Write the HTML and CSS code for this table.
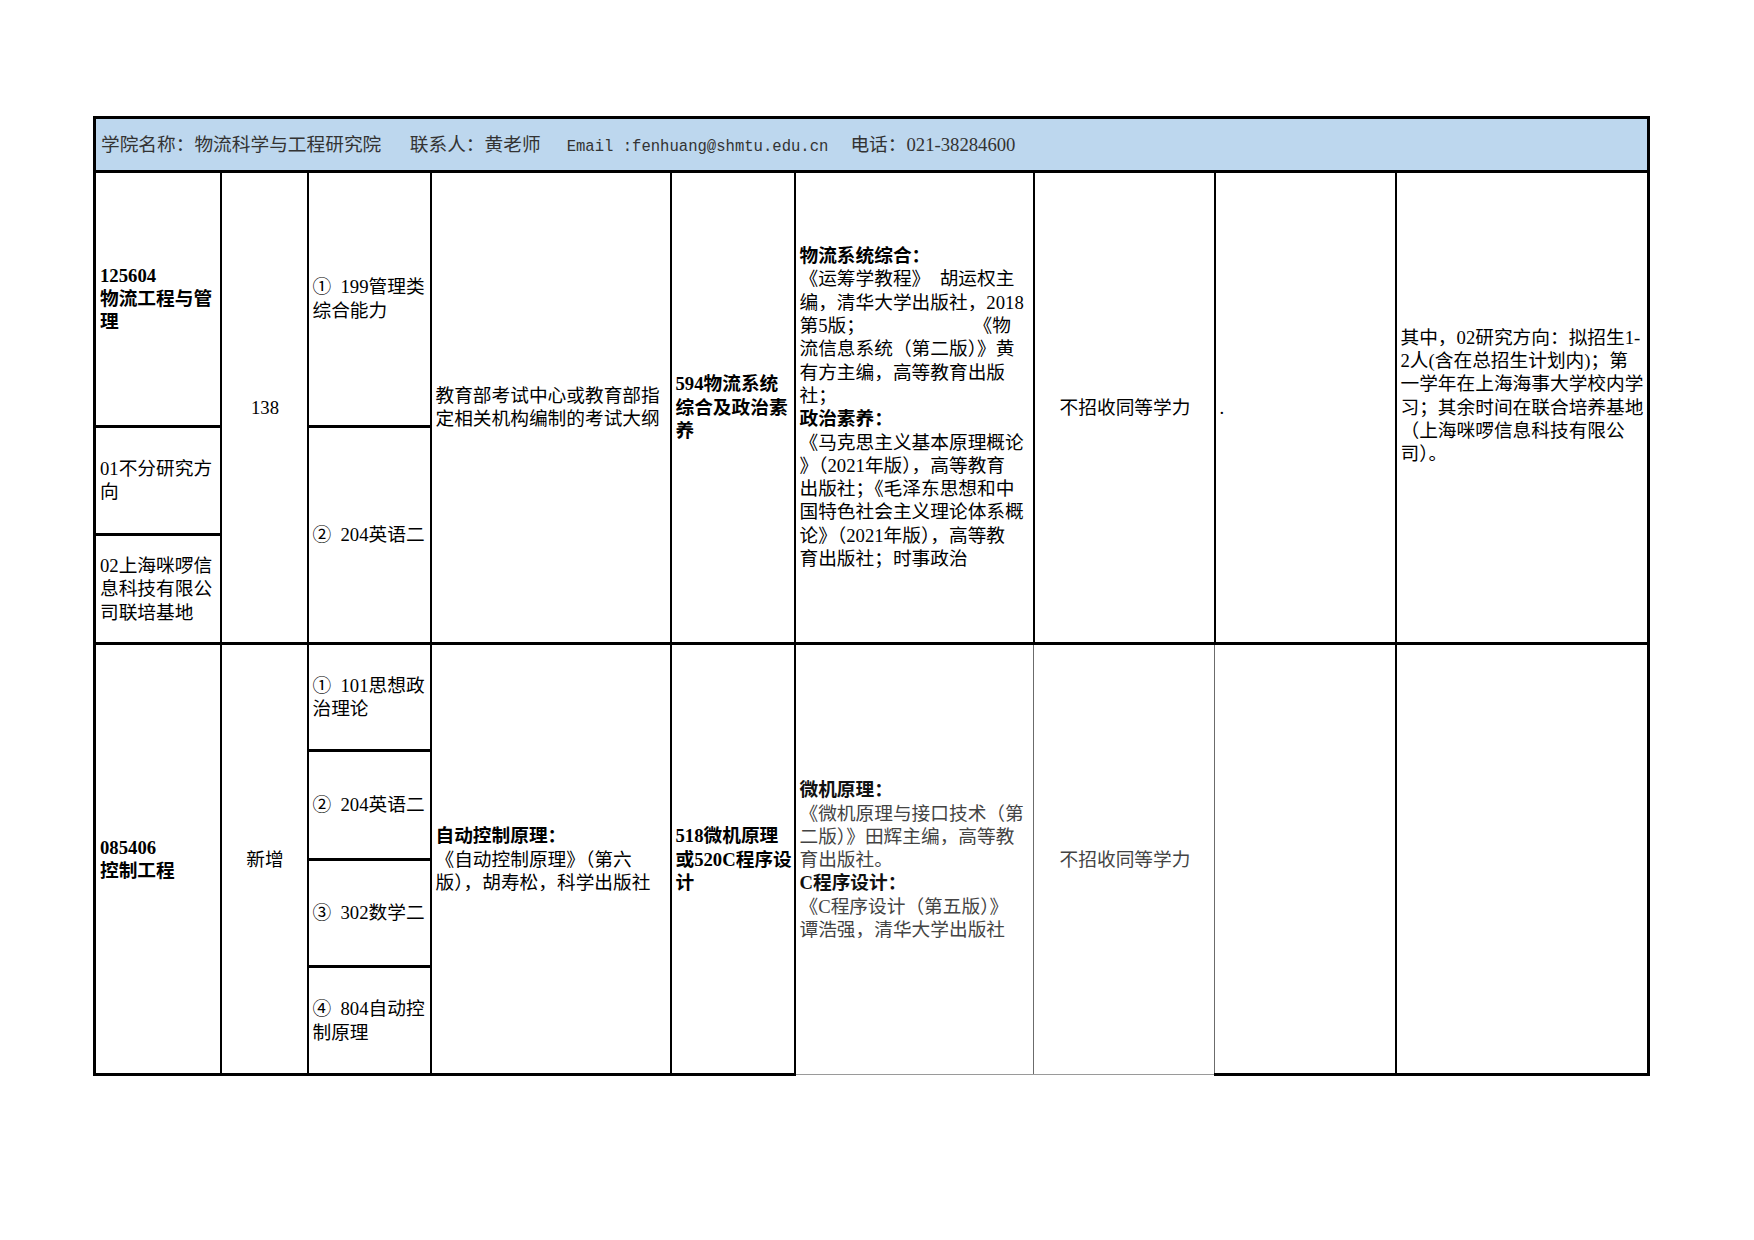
FILE: index.html
```html
<!DOCTYPE html>
<html lang="zh-CN">
<head>
<meta charset="utf-8">
<title>物流科学与工程研究院 招生目录</title>
<link rel="stylesheet" href="styles.css">
</head>
<body>
<table class="sheet">
  <colgroup>
    <col class="w1"><col class="w2"><col class="w3"><col class="w4"><col class="w5"><col class="w6"><col class="w7"><col class="w8"><col class="w9">
  </colgroup>
  <tr class="h-head">
    <td colspan="9" class="head"><span>学院名称：物流科学与工程研究院</span><span class="sep1">联系人：黄老师</span><span class="sep2 mono">Email :fenhuang@shmtu.edu.cn</span><span class="sep3">电话：021-38284600</span></td>
  </tr>
  <tr class="h-1a">
    <td class="first strong">125604<br>物流工程与管<br>理</td>
    <td rowspan="3" class="center">138</td>
    <td>①&ensp;199管理类<br>综合能力</td>
    <td rowspan="3">教育部考试中心或教育部指<br>定相关机构编制的考试大纲</td>
    <td rowspan="3" class="strong">594物流系统<br>综合及政治素<br>养</td>
    <td rowspan="3"><strong>物流系统综合：</strong><br>《运筹学教程》&ensp;胡运权主<br>编，清华大学出版社，2018<br>第5版；<span class="gap">《物</span><br>流信息系统（第二版）》黄<br>有方主编，高等教育出版<br>社；<br><strong>政治素养：</strong><br>《马克思主义基本原理概论<br>》（2021年版），高等教育<br>出版社；《毛泽东思想和中<br>国特色社会主义理论体系概<br>论》（2021年版），高等教<br>育出版社；时事政治</td>
    <td rowspan="3" class="center">不招收同等学力</td>
    <td rowspan="3">.</td>
    <td rowspan="3" class="last lift">其中，02研究方向：拟招生1-<br>2人(含在总招生计划内)；第<br>一学年在上海海事大学校内学<br>习；其余时间在联合培养基地<br>（上海咪啰信息科技有限公<br>司）。</td>
  </tr>
  <tr class="h-1b">
    <td class="first">01不分研究方<br>向</td>
    <td rowspan="2">②&ensp;204英语二</td>
  </tr>
  <tr class="h-1c">
    <td class="first">02上海咪啰信<br>息科技有限公<br>司联培基地</td>
  </tr>
  <tr class="h-2a group">
    <td rowspan="4" class="first bottom strong">085406<br>控制工程</td>
    <td rowspan="4" class="bottom center">新增</td>
    <td>①&ensp;101思想政<br>治理论</td>
    <td rowspan="4" class="bottom"><strong>自动控制原理：</strong><br>《自动控制原理》（第六<br>版），胡寿松，科学出版社</td>
    <td rowspan="4" class="bottom strong">518微机原理<br>或520C程序设<br>计</td>
    <td rowspan="4" class="muted soft-r soft-b"><strong>微机原理：</strong><br>《微机原理与接口技术（第<br>二版）》田辉主编，高等教<br>育出版社。<br><strong>C程序设计：</strong><br>《C程序设计（第五版）》<br>谭浩强，清华大学出版社</td>
    <td rowspan="4" class="muted center soft-l soft-r soft-b">不招收同等学力</td>
    <td rowspan="4" class="bottom soft-l"></td>
    <td rowspan="4" class="last bottom"></td>
  </tr>
  <tr class="h-2b">
    <td>②&ensp;204英语二</td>
  </tr>
  <tr class="h-2c">
    <td>③&ensp;302数学二</td>
  </tr>
  <tr class="h-2d">
    <td class="bottom">④&ensp;804自动控<br>制原理</td>
  </tr>
</table>
</body>
</html>
```

FILE: styles.css
```css
html, body {
  margin: 0;
  padding: 0;
  background: #ffffff;
}

body {
  font-family: "Liberation Serif", "Noto Sans CJK SC", serif;
  font-size: 18.7px;
  line-height: 23.3px;
  color: #000000;
}

.sheet {
  border-collapse: collapse;
  table-layout: fixed;
  width: 1554px;
  margin: 116px 0 0 93px;
}

.w1 { width: 126px; }
.w2 { width: 87px; }
.w3 { width: 123px; }
.w4 { width: 240px; }
.w5 { width: 124px; }
.w6 { width: 239px; }
.w7 { width: 181px; }
.w8 { width: 181px; }
.w9 { width: 253px; }

.sheet td {
  border: 2px solid #000000;
  border-top-width: 3px;
  border-bottom-width: 3px;
  padding: 0 2px 0 4px;
  vertical-align: middle;
  white-space: nowrap;
  overflow: hidden;
}

.h-head { height: 53.5px; }
.h-1a { height: 255px; }
.h-1b { height: 108.5px; }
.h-1c { height: 109px; }
.h-2a { height: 107px; }
.h-2b { height: 108.7px; }
.h-2c { height: 107.3px; }
.h-2d { height: 108.5px; }

.sheet td.head {
  background: #bdd7ee;
  color: #333333;
  border-width: 3px;
  padding-left: 5px;
  padding-top: 4px;
}

.head span {
  display: inline-block;
}

.sep1 { margin-left: 28.5px; }
.sep2 { margin-left: 26px; }
.sep3 { margin-left: 22px; }

.mono {
  font-family: "Liberation Mono", monospace;
  font-size: 15.58px;
}

.sheet td.first { border-left-width: 3px; }
.sheet td.last { border-right-width: 3px; }
.sheet td.bottom { border-bottom-width: 3px; }

.center { text-align: center; }

.strong,
.sheet td strong {
  font-weight: 700;
}

.gap {
  margin-left: 118px;
}

.sheet td.lift {
  padding-bottom: 23px;
}

.muted {
  color: #444444;
}

.muted strong {
  color: #111111;
}

.sheet td.soft-r { border-right: 1px solid #6b6b6b; }
.sheet td.soft-l { border-left: 1px solid #6b6b6b; }
.sheet td.soft-b { border-bottom: 1px solid #9a9a9a; }
```
